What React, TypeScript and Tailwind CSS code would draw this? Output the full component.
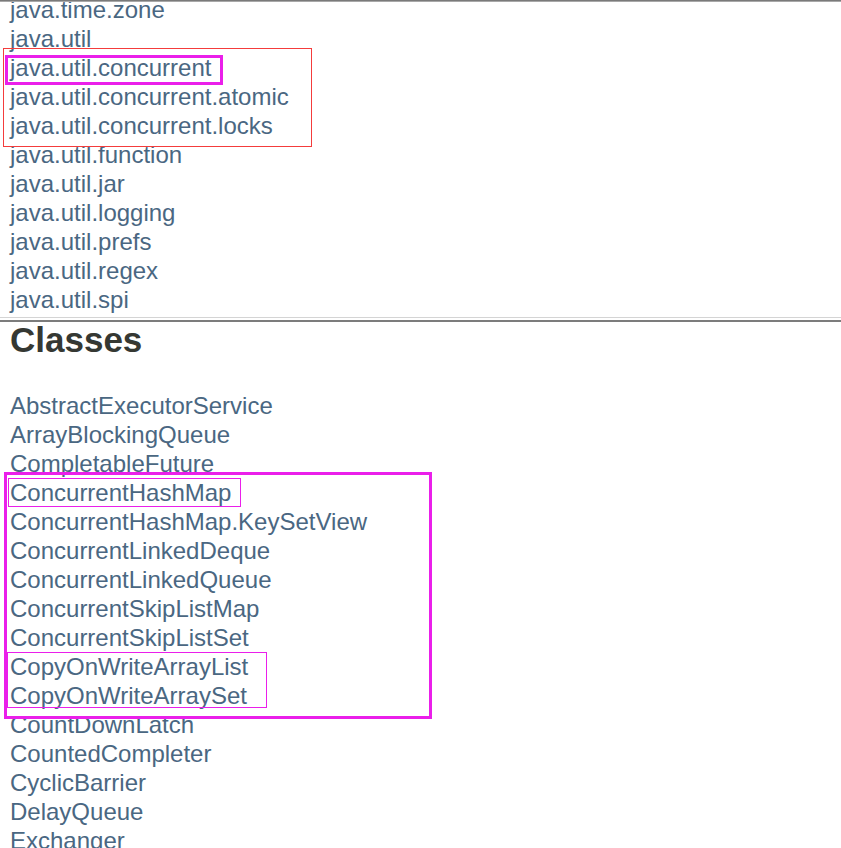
const packages = [
  'java.time.zone',
  'java.util',
  'java.util.concurrent',
  'java.util.concurrent.atomic',
  'java.util.concurrent.locks',
  'java.util.function',
  'java.util.jar',
  'java.util.logging',
  'java.util.prefs',
  'java.util.regex',
  'java.util.spi',
]

const classes = [
  'AbstractExecutorService',
  'ArrayBlockingQueue',
  'CompletableFuture',
  'ConcurrentHashMap',
  'ConcurrentHashMap.KeySetView',
  'ConcurrentLinkedDeque',
  'ConcurrentLinkedQueue',
  'ConcurrentSkipListMap',
  'ConcurrentSkipListSet',
  'CopyOnWriteArrayList',
  'CopyOnWriteArraySet',
  'CountDownLatch',
  'CountedCompleter',
  'CyclicBarrier',
  'DelayQueue',
  'Exchanger',
  'ExecutorCompletionService',
]

export default function App() {
  return (
    <div className="relative flex flex-col w-[841px] h-[848px] overflow-hidden bg-white font-['Liberation_Sans',Arial,sans-serif]">
      {/* frame top edge */}
      <div className="shrink-0 h-[1px] bg-[#7a7a7a]" />
      <div className="shrink-0 h-[1px] bg-[#a8a8a8]" />

      {/* package frame */}
      <div className="shrink-0 h-[313px] overflow-hidden">
        <ul className="flex flex-col -mt-[7px] pl-[10px]">
          {packages.map((p) => (
            <li key={p} className="h-[29px] text-[24px] leading-[29px] text-[#4a6782] whitespace-nowrap">
              {p}
            </li>
          ))}
        </ul>
      </div>

      {/* frame divider */}
      <div className="shrink-0 h-[2px]" />
      <div className="shrink-0 h-[1px] bg-[#d4d4d4]" />
      <div className="shrink-0 h-[2px]" />
      <div className="shrink-0 h-[2px] bg-[#7c7c7c]" />

      {/* class frame */}
      <h2 className="shrink-0 pl-[10px] text-[35px] leading-[35px] font-bold text-[#353833]">Classes</h2>
      <ul className="flex flex-col shrink-0 mt-[34px] pl-[10px]">
        {classes.map((c) => (
          <li key={c} className="h-[29px] text-[24px] leading-[29px] text-[#4a6782] whitespace-nowrap">
            {c}
          </li>
        ))}
      </ul>

      {/* annotation boxes */}
      <div className="absolute left-[3px] top-[48px] w-[309px] h-[99px] border border-[#f43c3c]" />
      <div className="absolute left-[5px] top-[55px] w-[218px] h-[30px] border-[3px] border-[#ea1fea]" />
      <div className="absolute left-[4px] top-[472px] w-[428px] h-[247px] border-[3px] border-[#ea1fea]" />
      <div className="absolute left-[8px] top-[478px] w-[233px] h-[29px] border border-[#ea1fea]" />
      <div className="absolute left-[7px] top-[652px] w-[260px] h-[56px] border border-[#ea1fea]" />
    </div>
  )
}
